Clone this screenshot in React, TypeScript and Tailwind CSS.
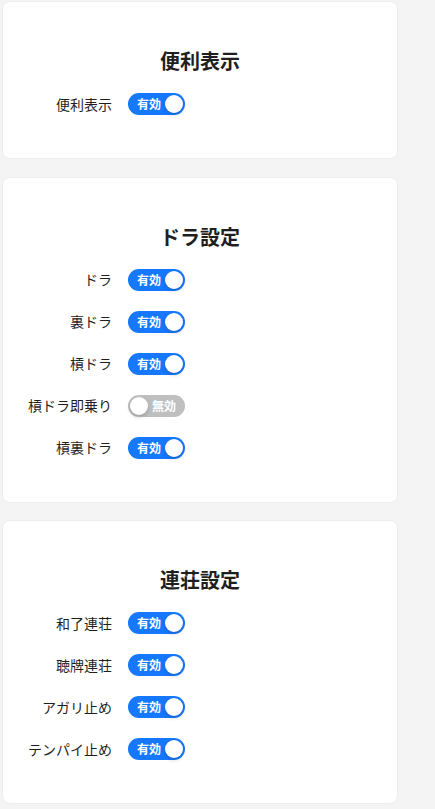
import { useState } from "react"

type Item = { label: string; on: boolean }

const sections: { title: string; items: Item[] }[] = [
  { title: "便利表示", items: [{ label: "便利表示", on: true }] },
  {
    title: "ドラ設定",
    items: [
      { label: "ドラ", on: true },
      { label: "裏ドラ", on: true },
      { label: "槓ドラ", on: true },
      { label: "槓ドラ即乗り", on: false },
      { label: "槓裏ドラ", on: true },
    ],
  },
  {
    title: "連荘設定",
    items: [
      { label: "和了連荘", on: true },
      { label: "聴牌連荘", on: true },
      { label: "アガリ止め", on: true },
      { label: "テンパイ止め", on: true },
    ],
  },
]

function Toggle({ initial }: { initial: boolean }) {
  const [on, setOn] = useState(initial)
  return (
    <button
      type="button"
      onClick={() => setOn(!on)}
      className={`relative flex h-[22px] w-[57px] items-center rounded-full ${on ? "bg-[#1677ff]" : "bg-[#bfbfbf]"}`}
    >
      {on ? (
        <>
          <span className="pl-[9px] text-[12px] font-bold leading-[22px] text-white">有効</span>
          <span className="absolute right-[2px] top-[2px] h-[18px] w-[18px] rounded-full bg-white shadow-[0_2px_4px_rgba(0,35,11,0.2)]" />
        </>
      ) : (
        <>
          <span className="absolute left-[2px] top-[2px] h-[18px] w-[18px] rounded-full bg-white shadow-[0_2px_4px_rgba(0,35,11,0.2)]" />
          <span className="ml-auto pr-[9px] text-[12px] font-bold leading-[22px] text-white">無効</span>
        </>
      )}
    </button>
  )
}

export default function App() {
  return (
    <div
      className="min-h-[809px] bg-[#f4f4f4] pl-[2px] pt-[1px]"
      style={{ fontFamily: '"Noto Sans CJK JP", "Noto Sans", sans-serif' }}
    >
      <div className="flex w-[396px] flex-col gap-[17.5px]">
        {sections.map((s) => (
          <div key={s.title} className="rounded-lg border border-[#ededed] bg-white pb-[33px] pt-[45px]">
            <h4 className="h-[28px] text-center text-[20px] font-bold leading-[28px] text-[#1f1f1f]">{s.title}</h4>
            <div className="mt-[8px] flex flex-col">
              {s.items.map((it) => (
                <div key={it.label} className="flex h-[42px] items-center gap-[16px]">
                  <span className="w-[109px] text-right text-[14px] text-[#1f1f1f]">{it.label}</span>
                  <Toggle initial={it.on} />
                </div>
              ))}
            </div>
          </div>
        ))}
      </div>
    </div>
  )
}
